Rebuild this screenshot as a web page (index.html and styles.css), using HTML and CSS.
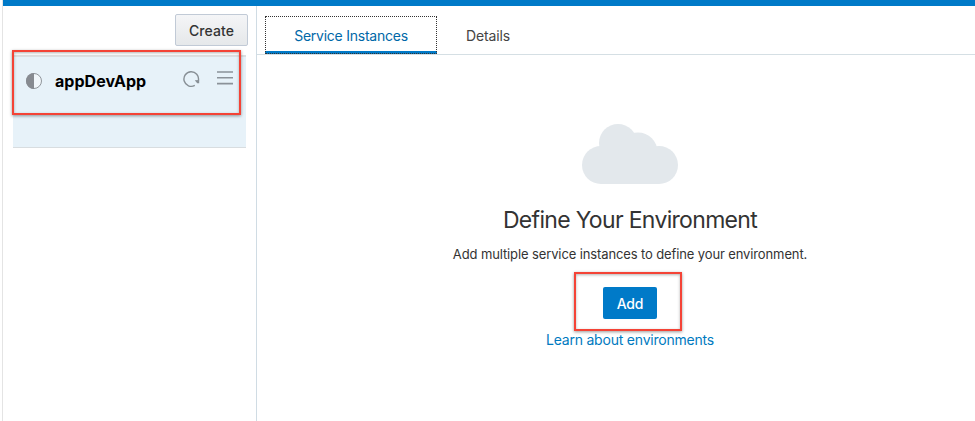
FILE: index.html
```html
<!DOCTYPE html>
<html lang="en">
<head>
<meta charset="utf-8">
<title>Environments</title>
<link rel="stylesheet" href="styles.css">
</head>
<body>
<div class="app">
  <aside class="sidebar">
    <button class="create"><span>Create</span></button>
    <div class="stack">
      <svg class="status" width="16" height="16" viewBox="0 0 16 16"><circle cx="8" cy="8" r="7.5" fill="#f1f7fb" stroke="#878b91" stroke-width=".9"/><path d="M8 0a8 8 0 0 0 0 16z" fill="#878b91"/></svg>
      <span class="name">appDevApp</span>
      <svg class="refresh" width="17" height="17" viewBox="0 0 17 17"><path d="M11.8 14.4A7.3 7.3 0 1 1 15.4 9.4" fill="none" stroke="#878f95" stroke-width="1.4"/><path d="M11.8 9.2L16.2 9V12.2H14.2z" fill="#878f95"/></svg>
      <svg class="menu" width="16" height="14" viewBox="0 0 16 14"><path d="M0 1h16M0 6.8h16M0 12.6h16" stroke="#8b9299" stroke-width="1.6"/></svg>
      <div class="mark mark-stack"></div>
    </div>
  </aside>
  <main class="main">
    <nav class="tabs">
      <a class="tab active">Service Instances</a>
      <a class="tab">Details</a>
    </nav>
    <section class="empty">
      <svg class="cloud" width="96" height="60" viewBox="0 0 96 60"><g fill="#e3e8ec"><circle cx="19" cy="41" r="19"/><circle cx="36" cy="19" r="19"/><circle cx="56" cy="28" r="19.5"/><circle cx="77" cy="41" r="19"/><path d="M19 30h58v30H19z"/></g></svg>
      <h1>Define Your Environment</h1>
      <p>Add multiple service instances to define your environment.</p>
      <div class="action">
        <button class="add">Add</button>
        <div class="mark mark-add"></div>
      </div>
      <a class="learn">Learn about environments</a>
    </section>
  </main>
</div>
</body>
</html>
```
FILE: styles.css
```css
* { box-sizing: border-box; }
body { margin: 0; background: #fff; font-family: Inter, "Liberation Sans", sans-serif; overflow: hidden; }
button { font-family: inherit; margin: 0; padding: 0; }
.app { height: 421px; margin-left: 3px; border-top: 6px solid #007ac8; display: flex; box-shadow: -1px 0 #e4e4e4; }
.sidebar { width: 254px; flex: none; border-right: 1px solid #d0dce4; padding: 8px 10px 0 10px; display: flex; flex-direction: column; }
.create { align-self: flex-end; width: 73px; height: 32px; margin-right: -2px; border: 1px solid #c1cad6; border-radius: 2px; background: linear-gradient(#f4f5f7, #e5e8ea); font-size: 14px; font-weight: 500; color: #333; letter-spacing: .1px; }
.stack { position: relative; margin-top: 9px; height: 93px; background: #e7f2f9; border-top: 2px solid #dcdfe1; border-bottom: 1px solid #d8dde0; display: flex; align-items: flex-start; padding: 14px 13px 0 13px; }
.status { margin-top: 2px; }
.name { margin-left: 13px; font-size: 16px; line-height: 20px; font-weight: 700; color: #000; letter-spacing: .03px; }
.refresh { margin-left: auto; }
.menu { margin-left: 17px; }
.mark { position: absolute; border: 2px solid #f44336; box-shadow: 0 1px 3px rgba(0,0,0,.4), inset 0 1px 3px rgba(0,0,0,.3); }
.mark-stack { left: -1px; top: -7px; width: 229px; height: 65px; }
.main { flex: 1; padding-top: 10px; }
.tabs { height: 39px; padding-left: 8px; border-bottom: 1px solid #d5dfe4; display: flex; }
.tab { height: 38px; font-size: 14px; line-height: 39px; color: #444; width: 102px; text-align: center; letter-spacing: -.1px; }
.active { width: 172px; color: #0068a8; border-bottom: 3px solid #007ac8; outline: 1px dotted #333; outline-offset: -1px; line-height: 40px; letter-spacing: -.24px; }
.empty { display: flex; flex-direction: column; align-items: center; padding: 69px 0 0; margin-left: 27px; width: 692px; }
.cloud { display: block; }
h1 { margin: 22px 0 0; font-size: 23px; line-height: 28px; font-weight: 400; color: #333; letter-spacing: -.68px; }
p { margin: 11px 0 0; font-size: 13px; line-height: 18px; color: #333; letter-spacing: -.12px; }
.action { position: relative; margin-top: 24px; height: 32px; }
.add { display: block; width: 54px; height: 32px; border: 0; border-radius: 2px; background: #007ac8; color: #fff; font-size: 14px; font-weight: 500; letter-spacing: -.2px; }
.mark-add { left: -29px; top: -15px; width: 108px; height: 59px; }
.learn { margin-top: 12px; font-size: 14px; line-height: 18px; color: #007ac0; letter-spacing: -.21px; }
```
